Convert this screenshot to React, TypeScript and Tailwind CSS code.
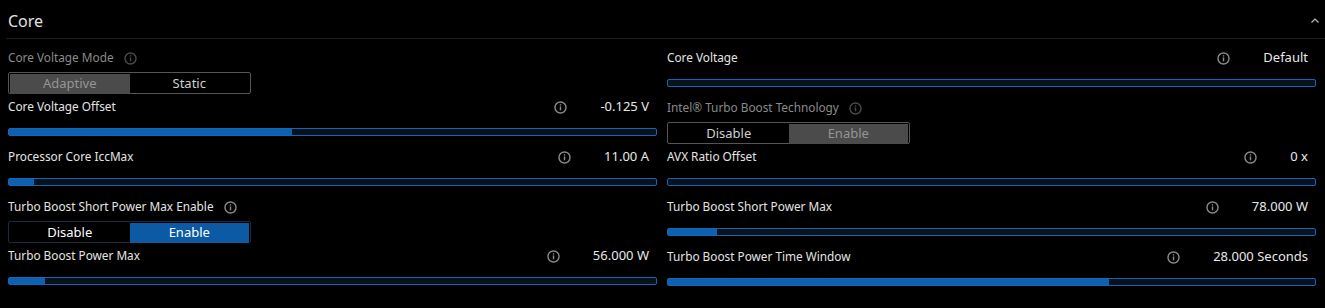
import React from 'react'

type Item =
  | { kind: 'slider'; label: string; value: string; fill: number }
  | { kind: 'toggle'; label: string; options: [string, string]; selected: number; disabled?: boolean }

const leftItems: Item[] = [
  { kind: 'toggle', label: 'Core Voltage Mode', options: ['Adaptive', 'Static'], selected: 0, disabled: true },
  { kind: 'slider', label: 'Core Voltage Offset', value: '-0.125 V', fill: 43.8 },
  { kind: 'slider', label: 'Processor Core IccMax', value: '11.00 A', fill: 3.9 },
  { kind: 'toggle', label: 'Turbo Boost Short Power Max Enable', options: ['Disable', 'Enable'], selected: 1 },
  { kind: 'slider', label: 'Turbo Boost Power Max', value: '56.000 W', fill: 5.5 },
]

const rightItems: Item[] = [
  { kind: 'slider', label: 'Core Voltage', value: 'Default', fill: 0 },
  { kind: 'toggle', label: 'Intel® Turbo Boost Technology', options: ['Disable', 'Enable'], selected: 1, disabled: true },
  { kind: 'slider', label: 'AVX Ratio Offset', value: '0 x', fill: 0 },
  { kind: 'slider', label: 'Turbo Boost Short Power Max', value: '78.000 W', fill: 7.6 },
  { kind: 'slider', label: 'Turbo Boost Power Time Window', value: '28.000 Seconds', fill: 68.2 },
]

function InfoIcon({ dim }: { dim?: boolean }) {
  return (
    <svg width="13" height="13" viewBox="0 0 12 12" className={dim ? 'text-[#4a4a4a]' : 'text-[#8a8a8a]'}>
      <circle cx="6" cy="6" r="5.1" fill="none" stroke="currentColor" strokeWidth="1.3" />
      <rect x="5.35" y="5" width="1.3" height="3.6" fill="currentColor" />
      <rect x="5.35" y="3" width="1.3" height="1.2" fill="currentColor" />
    </svg>
  )
}

function Slider({ item }: { item: Extract<Item, { kind: 'slider' }> }) {
  return (
    <div className="h-[50px]">
      <div className="flex h-5 items-center pr-2 pt-[2px]">
        <span className="text-[#e4e4e4]">{item.label}</span>
        <div className="ml-auto flex items-center">
          <InfoIcon />
          <span className="ml-[33px] text-[13px] text-[#e8e8e8]">{item.value}</span>
        </div>
      </div>
      <div className="mt-3 h-2 rounded-[2px] border border-[#1566b8] bg-[#07121d]">
        <div className="h-full bg-[#0d62b0]" style={{ width: `${item.fill}%` }} />
      </div>
    </div>
  )
}

function Toggle({ item }: { item: Extract<Item, { kind: 'toggle' }> }) {
  const dis = item.disabled
  return (
    <div className="h-[49px]">
      <div className="flex h-5 items-center gap-[10px] pt-[2px]">
        <span className={dis ? 'text-[#8a8a8a]' : 'text-[#e4e4e4]'}>{item.label}</span>
        <InfoIcon dim={dis} />
      </div>
      <div
        className={
          'mt-[5px] grid h-[22px] w-[243px] grid-cols-2 rounded-[2px] border p-px text-[13px] ' +
          (dis ? 'border-[#555555]' : 'border-[#1c2a3a]')
        }
      >
        {item.options.map((o, i) => {
          const sel = i === item.selected
          let cls = 'flex items-center justify-center '
          if (sel) cls += dis ? 'bg-[#4b4b4b] text-[#959595]' : 'bg-[#0b5aa3] text-white'
          else cls += dis ? 'text-[#cfcfcf]' : 'text-white'
          return (
            <div key={o} className={cls}>
              {o}
            </div>
          )
        })}
      </div>
    </div>
  )
}

function Column({ items }: { items: Item[] }) {
  return (
    <div className="flex flex-col">
      {items.map((it) =>
        it.kind === 'slider' ? <Slider key={it.label} item={it} /> : <Toggle key={it.label} item={it} />
      )}
    </div>
  )
}

export default function App() {
  return (
    <div
      className="h-[308px] w-[1325px] overflow-hidden bg-black text-[11.8px]"
      style={{ fontFamily: '"Noto Sans", "Open Sans", sans-serif' }}
    >
      <div className="ml-[6px] flex h-[39px] items-center border-b border-[#1e1e1e] pl-[2px] pr-[5px] pt-[3px]">
        <span className="text-[16px] text-[#e2e2e2]">Core</span>
        <svg width="10" height="10" viewBox="0 0 10 10" className="ml-auto text-[#bdbdbd]">
          <path d="M1.5 6.5 L5 3 L8.5 6.5" fill="none" stroke="currentColor" strokeWidth="1.2" />
        </svg>
      </div>
      <div className="mt-2 grid grid-cols-2 gap-x-[10px] pl-2 pr-[9px]">
        <Column items={leftItems} />
        <Column items={rightItems} />
      </div>
    </div>
  )
}
